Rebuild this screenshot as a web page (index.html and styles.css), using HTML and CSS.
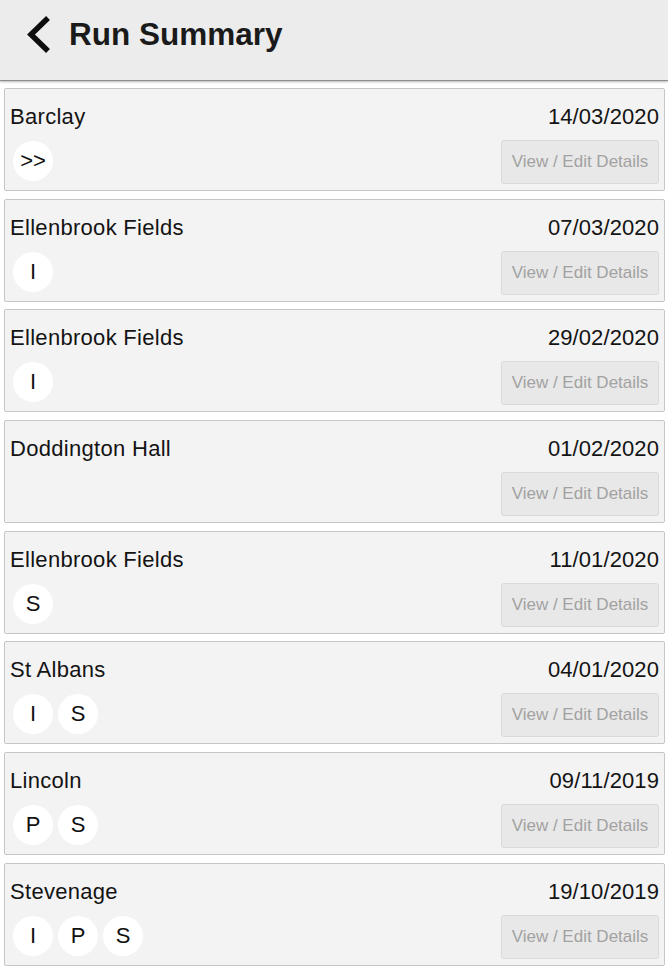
FILE: index.html
```
<!DOCTYPE html>
<html>
<head>
<meta charset="utf-8">
<title>Run Summary</title>
<link rel="stylesheet" href="styles.css">
</head>
<body>
<header class="topbar">
  <svg class="back" width="30" height="40" viewBox="0 0 30 40" aria-hidden="true">
    <polyline points="23,4 6,20.5 23,37" fill="none" stroke="#0d0d0d" stroke-width="5.5" stroke-linejoin="miter" stroke-linecap="butt"/>
  </svg>
  <h1 class="title">Run Summary</h1>
</header>
<main class="list">
  <div class="card">
    <div class="row-top"><span class="name">Barclay</span><span class="date">14/03/2020</span></div>
    <div class="row-bottom"><div class="badges"><span class="badge">&gt;&gt;</span></div><button class="btn">View / Edit Details</button></div>
  </div>
  <div class="card">
    <div class="row-top"><span class="name">Ellenbrook Fields</span><span class="date">07/03/2020</span></div>
    <div class="row-bottom"><div class="badges"><span class="badge">I</span></div><button class="btn">View / Edit Details</button></div>
  </div>
  <div class="card">
    <div class="row-top"><span class="name">Ellenbrook Fields</span><span class="date">29/02/2020</span></div>
    <div class="row-bottom"><div class="badges"><span class="badge">I</span></div><button class="btn">View / Edit Details</button></div>
  </div>
  <div class="card">
    <div class="row-top"><span class="name">Doddington Hall</span><span class="date">01/02/2020</span></div>
    <div class="row-bottom"><div class="badges"></div><button class="btn">View / Edit Details</button></div>
  </div>
  <div class="card">
    <div class="row-top"><span class="name">Ellenbrook Fields</span><span class="date">11/01/2020</span></div>
    <div class="row-bottom"><div class="badges"><span class="badge">S</span></div><button class="btn">View / Edit Details</button></div>
  </div>
  <div class="card">
    <div class="row-top"><span class="name">St Albans</span><span class="date">04/01/2020</span></div>
    <div class="row-bottom"><div class="badges"><span class="badge">I</span><span class="badge">S</span></div><button class="btn">View / Edit Details</button></div>
  </div>
  <div class="card">
    <div class="row-top"><span class="name">Lincoln</span><span class="date">09/11/2019</span></div>
    <div class="row-bottom"><div class="badges"><span class="badge">P</span><span class="badge">S</span></div><button class="btn">View / Edit Details</button></div>
  </div>
  <div class="card">
    <div class="row-top"><span class="name">Stevenage</span><span class="date">19/10/2019</span></div>
    <div class="row-bottom"><div class="badges"><span class="badge">I</span><span class="badge">P</span><span class="badge">S</span></div><button class="btn">View / Edit Details</button></div>
  </div>
</main>
</body>
</html>
```
FILE: styles.css
```
html, body {
  margin: 0;
  padding: 0;
  background: #ffffff;
  font-family: "Liberation Sans", Arial, sans-serif;
  color: #141414;
}
.topbar {
  height: 80px;
  background: #ececec;
  border-bottom: 1px solid #8c8c8c;
  box-shadow: 0 1px 2px rgba(0, 0, 0, 0.28);
  display: flex;
  align-items: center;
  padding-left: 25px;
  box-sizing: content-box;
}
.back {
  display: block;
  margin-top: -12px;
}
.title {
  margin: -11px 0 0 14px;
  font-size: 31.5px;
  font-weight: bold;
  color: #1a1a1a;
}
.list {
  display: flex;
  flex-direction: column;
  gap: 7.7px;
  padding: 7px 3px 8px 4px;
}
.card {
  height: 103px;
  box-sizing: border-box;
  background: #f3f3f3;
  border: 1px solid #c6c6c6;
  border-radius: 2px;
  padding: 15px 5px 6px 5px;
  display: flex;
  flex-direction: column;
}
.row-top {
  display: flex;
  justify-content: space-between;
  font-size: 22px;
  line-height: 26px;
  height: 26px;
}
.name {
  letter-spacing: 0.3px;
}
.date {
  letter-spacing: 0.1px;
}
.row-bottom {
  margin-top: 10px;
  height: 44px;
  display: flex;
  align-items: center;
  justify-content: space-between;
}
.badges {
  display: flex;
  gap: 5px;
  padding-left: 3px;
  margin-top: -2px;
}
.badge {
  width: 40px;
  height: 40px;
  border-radius: 50%;
  background: #ffffff;
  display: flex;
  align-items: center;
  justify-content: center;
  font-size: 22px;
  color: #111;
}
.btn {
  width: 158px;
  height: 44px;
  box-sizing: border-box;
  background: #e8e8e8;
  border: 1px solid #dadada;
  border-radius: 3px;
  font-family: "Liberation Sans", Arial, sans-serif;
  font-size: 17px;
  color: #a2a2a2;
  padding: 0;
}
```
